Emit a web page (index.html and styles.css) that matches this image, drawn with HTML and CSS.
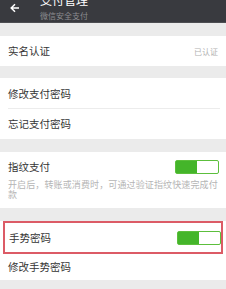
FILE: index.html
```html
<!DOCTYPE html>
<html lang="zh">
<head>
<meta charset="utf-8">
<link rel="stylesheet" href="styles.css">
</head>
<body>
<header class="topbar">
  <svg class="back" width="10" height="10" viewBox="0 0 10 10"><path d="M9 5H1.5M5 1.2L1.2 5L5 8.8" fill="none" stroke="#fff" stroke-width="1.5"/></svg>
  <div class="titles">
    <div class="title">支付管理</div>
    <div class="subtitle">微信安全支付</div>
  </div>
</header>
<section class="card">
  <div class="row"><span class="label">实名认证</span><span class="value">已认证</span></div>
</section>
<section class="card">
  <div class="row divided"><span class="label">修改支付密码</span></div>
  <div class="row"><span class="label">忘记支付密码</span></div>
</section>
<section class="card finger">
  <div class="row tall"><span class="label">指纹支付</span><span class="switch"><span class="knob"></span></span></div>
  <p class="desc">开启后，转账或消费时，可通过验证指纹快速完成付<br>款</p>
</section>
<section class="card last">
  <div class="row highlight"><span class="label">手势密码</span><span class="switch"><span class="knob"></span></span></div>
  <div class="row short"><span class="label">修改手势密码</span></div>
</section>
</body>
</html>
```
FILE: styles.css
```css
html, body {
  margin: 0;
  padding: 0;
}
body {
  background: #ebebeb;
  font-family: "Noto Sans CJK SC", "Noto Sans", sans-serif;
  color: #353535;
  width: 226px;
  height: 289px;
  overflow: hidden;
}
.topbar {
  height: 22px;
  background: #393a3f;
  border-bottom: 1px solid #4d4e52;
  display: flex;
  align-items: flex-start;
  overflow: hidden;
}
.back {
  margin: 3px 0 0 10px;
}
.titles {
  margin: -8px 0 0 20px;
  display: flex;
  flex-direction: column;
}
.title {
  color: #fff;
  font-size: 12px;
  line-height: 16px;
}
.subtitle {
  color: #8c8c8f;
  font-size: 8px;
  line-height: 10px;
  margin-top: 3px;
}
.card {
  background: #fff;
  margin-top: 13px;
}
.card + .card {
  margin-top: 12px;
}
.finger {
  margin-top: 13px !important;
  padding-bottom: 8px;
}
.last {
  margin-top: 13px !important;
}
.row {
  height: 30px;
  display: flex;
  align-items: center;
  justify-content: space-between;
  padding: 0 8px;
  box-sizing: border-box;
}
.divided {
  height: 31px;
  position: relative;
}
.divided::after {
  content: "";
  position: absolute;
  left: 8px;
  right: 6px;
  bottom: 0;
  height: 1px;
  background: #ececec;
}
.tall {
  height: 28px;
  padding-top: 2px;
}
.label {
  font-size: 10.5px;
  line-height: 14px;
}
.value {
  font-size: 8px;
  color: #b2b2b2;
}
.switch {
  width: 44px;
  height: 14px;
  box-sizing: border-box;
  border: 1px solid #5cbf3c;
  border-radius: 2px;
  background: #fff;
  display: flex;
  margin-right: -1px;
}
.knob {
  width: 21px;
  height: 100%;
  background: #44b52a;
}
.desc {
  margin: 0;
  padding: 0 8px;
  font-size: 9px;
  letter-spacing: 0.12px;
  line-height: 10px;
  color: #b5b5b5;
  white-space: nowrap;
}
.highlight {
  margin: 0 3px;
  margin-top: 1px;
  height: 33px;
  border: 2px solid #dc5b66;
  padding: 0 1px 0 4px;
}
.short {
  height: 26px;
}
```
